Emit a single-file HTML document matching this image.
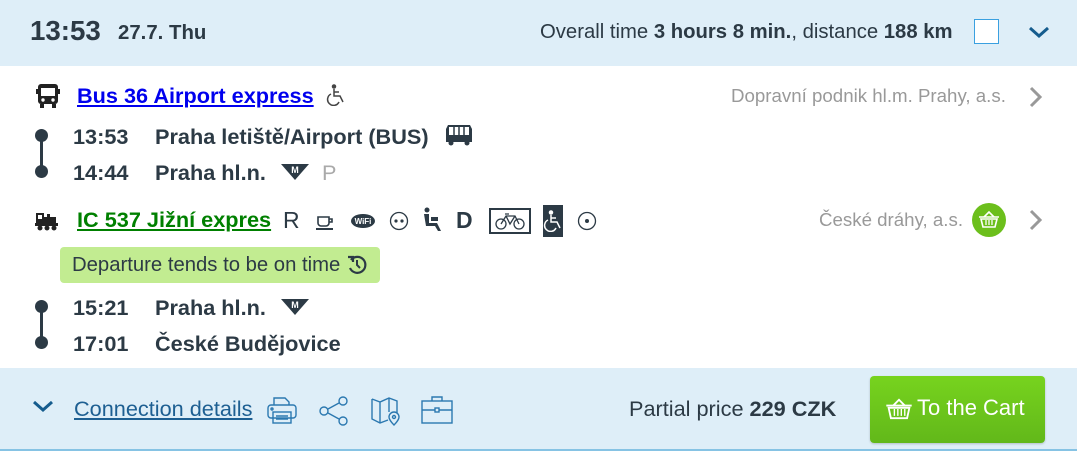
<!DOCTYPE html>
<html><head><meta charset="utf-8"><style>
*{margin:0;padding:0;box-sizing:border-box}
body{width:1077px;height:453px;background:#fff;font-family:"Liberation Sans",Arial,sans-serif;color:#2c3a45;position:relative;overflow:hidden}
.a{position:absolute;white-space:nowrap}
.hdr{position:absolute;left:0;top:0;width:1077px;height:66px;background:#deeef8}
.ftr{position:absolute;left:0;top:368px;width:1077px;height:83px;background:#deeef8;border-bottom:2px solid #86c3e4}
.b{font-weight:bold}
.f20{font-size:21.7px}
.dot{position:absolute;width:13px;height:13px;border-radius:50%;background:#2c3a45}
.ln{position:absolute;width:3px;background:#2c3a45}
.gray{color:#999}
</style></head><body>
<div class="hdr"></div>
<div class="a b" style="left:30px;top:15px;font-size:27.7px">13:53</div>
<div class="a b" style="left:118px;top:22px;font-size:20.4px">27.7. Thu</div>
<div class="a" style="left:540px;top:21px;font-size:20.3px">Overall time <b>3 hours 8 min.</b>, distance <b>188 km</b></div>
<div class="a" style="left:974px;top:19px;width:25px;height:25px;background:#fff;border:1px solid #3aa0e0"></div>
<svg class="a" style="left:1027px;top:24px" width="24" height="16" viewBox="0 0 24 16"><path d="M3 4l9 8 9-8" fill="none" stroke="#155c8e" stroke-width="3"/></svg>

<svg class="a" style="left:35px;top:83px" width="26" height="26" viewBox="0 0 26 26"><rect x="3" y="1" width="20" height="20" rx="3" fill="#222"/><rect x="6" y="5" width="14" height="8" fill="#fff"/><rect x="1" y="6" width="2" height="5" fill="#222"/><rect x="23" y="6" width="2" height="5" fill="#222"/><circle cx="8" cy="17" r="1.7" fill="#fff"/><circle cx="18" cy="17" r="1.7" fill="#fff"/><rect x="5" y="21" width="4" height="4" fill="#222"/><rect x="17" y="21" width="4" height="4" fill="#222"/></svg>
<div class="a b f20" style="left:77px;top:83px;color:#0000ee;text-decoration:underline">Bus 36 Airport express</div>
<svg class="a" style="left:326px;top:84px" width="20" height="22" viewBox="0 0 20 22" fill="none" stroke="#444" stroke-width="1.5"><circle cx="8" cy="2.5" r="1.5" fill="#444"/><path d="M8 5v7h6l3 6"/><path d="M8 8h5"/><path d="M5 10a6 6 0 1 0 8 8"/></svg>
<div class="a gray" style="left:731px;top:85px;font-size:18.7px">Dopravní podnik hl.m. Prahy, a.s.</div>
<svg class="a" style="left:1028px;top:85px" width="16" height="24"><path d="M3 3l9 9-9 9" fill="none" stroke="#999" stroke-width="3"/></svg>

<div class="dot" style="left:35px;top:129px"></div><div class="ln" style="left:40px;top:135px;height:36px"></div><div class="dot" style="left:35px;top:165px"></div>
<div class="a b f20" style="left:73px;top:124px">13:53</div>
<div class="a b f20" style="left:155px;top:124px">Praha letiště/Airport (BUS)</div>
<svg class="a" style="left:445px;top:123px" width="28" height="24" viewBox="0 0 28 24"><path d="M3 2h22l2 4v13H1V6z" fill="#2c3a45"/><rect x="4" y="4" width="20" height="8" fill="#fff"/><path d="M9 4v8M14 4v8M19 4v8" stroke="#2c3a45" stroke-width="1.5"/><circle cx="6" cy="20" r="2.5" fill="#2c3a45"/><circle cx="22" cy="20" r="2.5" fill="#2c3a45"/></svg>
<div class="a b f20" style="left:73px;top:160px">14:44</div>
<div class="a b f20" style="left:155px;top:160px">Praha hl.n.</div>
<svg class="a" style="left:280px;top:163px" width="30" height="18" viewBox="0 0 30 18"><path d="M1 1h28l-14 16z" fill="#2c3a45"/><text x="15" y="10" font-size="9" font-weight="bold" fill="#fff" text-anchor="middle" font-family="Liberation Sans">M</text></svg>
<div class="a f20" style="left:322px;top:160px;color:#aaa">P</div>

<svg class="a" style="left:34px;top:211px" width="26" height="20" viewBox="0 0 26 20"><rect x="2" y="2" width="8" height="10" fill="#222"/><rect x="4" y="4" width="4" height="4" fill="#fff"/><rect x="10" y="6" width="12" height="8" fill="#222"/><rect x="13" y="3" width="3" height="4" fill="#222"/><rect x="1" y="12" width="23" height="3" fill="#222"/><circle cx="6" cy="17" r="2.5" fill="#222"/><circle cx="13" cy="17" r="2.5" fill="#222"/><circle cx="20" cy="17" r="2.5" fill="#222"/></svg>
<div class="a b f20" style="left:77px;top:207px;color:#008000;text-decoration:underline">IC 537 Jižní expres</div>
<div class="a" style="left:283px;top:207px;font-size:23px">R</div>
<svg class="a" style="left:314px;top:212px" width="22" height="20"><path d="M4 5h11v6a3 3 0 0 1-3 3H7a3 3 0 0 1-3-3z M15 7h3v3h-3" fill="none" stroke="#2c3a45" stroke-width="1.6"/><path d="M2 17h17" stroke="#2c3a45" stroke-width="2"/></svg>
<svg class="a" style="left:350px;top:212px" width="26" height="18"><ellipse cx="13" cy="9" rx="12" ry="7" fill="#2c3a45"/><text x="13" y="12" font-size="8" font-weight="bold" fill="#fff" text-anchor="middle" font-family="Liberation Sans">WiFi</text></svg>
<svg class="a" style="left:389px;top:211px" width="20" height="20"><circle cx="10" cy="10" r="8.5" fill="none" stroke="#2c3a45" stroke-width="1.3"/><circle cx="7" cy="10" r="1.6" fill="#2c3a45"/><circle cx="13" cy="10" r="1.6" fill="#2c3a45"/></svg>
<svg class="a" style="left:421px;top:207px" width="24" height="26" viewBox="0 0 24 26"><circle cx="6" cy="3" r="2.5" fill="#2c3a45"/><path d="M3 7h5v9h8l4 8h-3l-3-5H5z" fill="#2c3a45"/><path d="M10 10h7v4h-7z" fill="#2c3a45"/></svg>
<div class="a b" style="left:456px;top:207px;font-size:23px">D</div>
<svg class="a" style="left:489px;top:208px" width="42" height="26"><rect x="1" y="1" width="40" height="24" fill="none" stroke="#2c3a45" stroke-width="2"/><circle cx="12" cy="16" r="5" fill="none" stroke="#2c3a45" stroke-width="1.3"/><circle cx="30" cy="16" r="5" fill="none" stroke="#2c3a45" stroke-width="1.3"/><path d="M12 16l5-8h9l4 8M17 8l4 8 5-8M16 6h4" fill="none" stroke="#2c3a45" stroke-width="1.3"/></svg>
<div class="a" style="left:543px;top:205px;width:20px;height:32px;background:#2c3a45"></div>
<svg class="a" style="left:543px;top:210px" width="20" height="22" viewBox="0 0 20 22" fill="none" stroke="#fff" stroke-width="1.5"><circle cx="8" cy="2.5" r="1.5" fill="#fff"/><path d="M8 5v7h6l3 6"/><path d="M8 8h5"/><path d="M5 10a6 6 0 1 0 8 8"/></svg>
<svg class="a" style="left:577px;top:211px" width="20" height="20"><circle cx="10" cy="10" r="8.5" fill="none" stroke="#2c3a45" stroke-width="1.3"/><circle cx="10" cy="10" r="2" fill="#2c3a45"/></svg>
<div class="a gray" style="left:819px;top:209px;font-size:18.7px">České dráhy, a.s.</div>
<div class="a" style="left:972px;top:203px;width:34px;height:34px;border-radius:50%;background:#6cbf1c"></div>
<svg class="a" style="left:976px;top:207px" width="26" height="26" viewBox="0 0 26 26"><path d="M8 10l5-5 5 5" fill="none" stroke="#fff" stroke-width="1.6"/><path d="M3 10h20M5 12l2 8h12l2-8z" fill="none" stroke="#fff" stroke-width="1.6"/><path d="M10 13v5M13 13v5M16 13v5" stroke="#fff" stroke-width="1.3"/></svg>
<svg class="a" style="left:1028px;top:208px" width="16" height="24"><path d="M3 3l9 9-9 9" fill="none" stroke="#999" stroke-width="3"/></svg>

<div class="a" style="left:60px;top:247px;width:320px;height:36px;background:#c2ec91;border-radius:4px"></div>
<div class="a" style="left:72px;top:254px;font-size:20.3px;color:#2c3a45">Departure tends to be on time</div>
<svg class="a" style="left:346px;top:254px" width="22" height="22" viewBox="0 0 22 22"><path d="M5 6a8 8 0 1 1-1 8" fill="none" stroke="#2c3a45" stroke-width="2.2"/><path d="M2 3h5v5" fill="none" stroke="#2c3a45" stroke-width="2.2"/><path d="M11 6v5l3 3" fill="none" stroke="#2c3a45" stroke-width="2"/></svg>

<div class="dot" style="left:35px;top:300px"></div><div class="ln" style="left:40px;top:306px;height:36px"></div><div class="dot" style="left:35px;top:336px"></div>
<div class="a b f20" style="left:73px;top:295px">15:21</div>
<div class="a b f20" style="left:155px;top:295px">Praha hl.n.</div>
<svg class="a" style="left:280px;top:298px" width="30" height="18" viewBox="0 0 30 18"><path d="M1 1h28l-14 16z" fill="#2c3a45"/><text x="15" y="10" font-size="9" font-weight="bold" fill="#fff" text-anchor="middle" font-family="Liberation Sans">M</text></svg>
<div class="a b f20" style="left:73px;top:331px">17:01</div>
<div class="a b f20" style="left:155px;top:331px">České Budějovice</div>

<div class="ftr"></div>
<svg class="a" style="left:32px;top:399px" width="22" height="16"><path d="M2 3l9 8 9-8" fill="none" stroke="#155c8e" stroke-width="3"/></svg>
<div class="a" style="left:74px;top:396px;font-size:21.7px;color:#1d5f92;text-decoration:underline">Connection details</div>
<svg class="a" style="left:266px;top:396px" width="32" height="30" viewBox="0 0 32 30" fill="none" stroke="#2b78b0" stroke-width="1.4"><path d="M8 9V2h11l4 4v3"/><rect x="2" y="9" width="28" height="13" rx="3"/><rect x="7" y="16" width="18" height="11"/><path d="M10 20h12M10 23h12"/><circle cx="6" cy="13" r="1"/></svg>
<svg class="a" style="left:318px;top:395px" width="34" height="32" viewBox="0 0 34 32" fill="none" stroke="#2b78b0" stroke-width="1.4"><circle cx="6" cy="16" r="4"/><circle cx="25" cy="6" r="4"/><circle cx="25" cy="26" r="4"/><path d="M10 14l11-6M10 18l11 6"/></svg>
<svg class="a" style="left:370px;top:395px" width="32" height="32" viewBox="0 0 32 32" fill="none" stroke="#2b78b0" stroke-width="1.4"><path d="M2 4l8 3 9-4 8 3v12M2 4v20l8 4 8-3M10 7v21M19 3v14"/><path d="M24 30s-5-5-5-8a5 5 0 0 1 10 0c0 3-5 8-5 8z"/><circle cx="24" cy="22" r="1.5"/></svg>
<svg class="a" style="left:420px;top:395px" width="34" height="30" viewBox="0 0 34 30" fill="none" stroke="#2b78b0" stroke-width="1.4"><path d="M12 6V2h10v4"/><rect x="2" y="6" width="30" height="22"/><path d="M2 15h13M19 15h13"/><rect x="15" y="13" width="4" height="4"/></svg>
<div class="a" style="left:629px;top:396px;font-size:21.7px">Partial price <b>229 CZK</b></div>
<div class="a" style="left:870px;top:376px;width:175px;height:67px;border-radius:4px;background:linear-gradient(#77d31e,#62b81a);box-shadow:0 1px 2px rgba(0,0,0,.2)"></div>
<svg class="a" style="left:884px;top:394px" width="30" height="30" viewBox="0 0 26 26"><path d="M8 10l5-5 5 5" fill="none" stroke="#fff" stroke-width="1.6"/><path d="M2 10h22M4 12l2 9h14l2-9z" fill="none" stroke="#fff" stroke-width="1.6"/><path d="M9 13v6M12 13v6M15 13v6M18 13v6" stroke="#fff" stroke-width="1.2"/></svg>
<div class="a" style="left:917px;top:395px;font-size:22px;color:#fff">To the Cart</div>
</body></html>
